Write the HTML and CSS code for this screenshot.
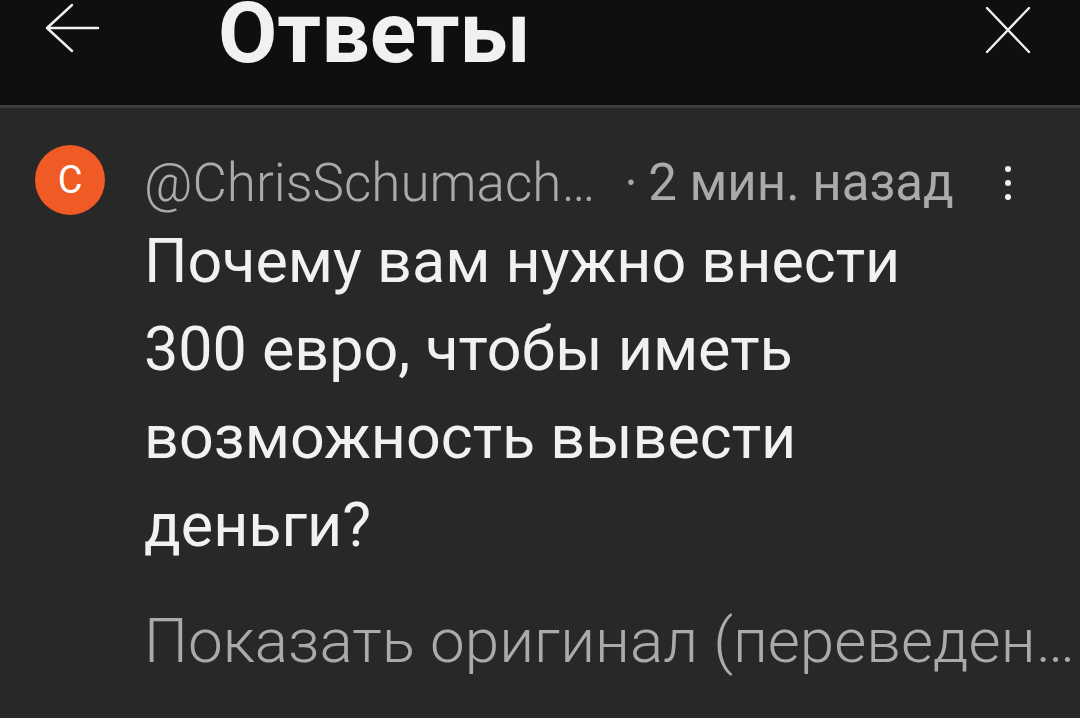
FILE: index.html
```html
<!DOCTYPE html>
<html lang="ru">
<head>
<meta charset="utf-8">
<title>Ответы</title>
<link rel="stylesheet" href="styles.css">
</head>
<body>
<div class="page">
  <header class="topbar">
    <svg class="back" width="56" height="52" viewBox="0 0 56 52" aria-hidden="true">
      <path d="M3 26H54M3 26L28 3M3 26L28 49" fill="none" stroke="#f1f1f1" stroke-width="2.4" stroke-linecap="round"/>
    </svg>
    <h1 class="title">Ответы</h1>
    <svg class="close" width="48" height="50" viewBox="0 0 48 50" aria-hidden="true">
      <path d="M3 3L45 47M45 3L3 47" fill="none" stroke="#f1f1f1" stroke-width="2.4" stroke-linecap="round"/>
    </svg>
  </header>
  <section class="comment">
    <div class="avatar">C</div>
    <div class="content">
      <div class="meta">
        <span class="author">@ChrisSchumach…</span>
        <span class="sep">•</span>
        <span class="time">2 мин. назад</span>
        <svg class="kebab" width="12" height="36" viewBox="0 0 12 36" aria-hidden="true">
          <circle cx="6" cy="4" r="3" fill="#f1f1f1"/>
          <circle cx="6" cy="18" r="3" fill="#f1f1f1"/>
          <circle cx="6" cy="32" r="3" fill="#f1f1f1"/>
        </svg>
      </div>
      <p class="text">Почему вам нужно внести<br>300 евро, чтобы иметь<br>возможность вывести<br>деньги?</p>
      <div class="original">Показать оригинал (переведен…</div>
    </div>
  </section>
</div>
</body>
</html>
```
FILE: styles.css
```css
html, body {
  margin: 0;
  padding: 0;
  background: #282828;
}
body {
  font-family: Roboto, "Noto Sans", "Liberation Sans", sans-serif;
  color: #f1f1f1;
  width: 1080px;
  height: 718px;
  overflow: hidden;
}
.page {
  display: flex;
  flex-direction: column;
}
.topbar {
  height: 105px;
  background: #0f0f0f;
  border-bottom: 3px solid #3d3d3d;
  display: flex;
  align-items: flex-start;
}
.back {
  margin-left: 44px;
  margin-top: 2px;
  flex: none;
}
.title {
  margin: 1px 0 0 118px;
  font-size: 86px;
  line-height: 64px;
  font-weight: 700;
  color: #f1f1f1;
}
.close {
  margin-left: auto;
  margin-right: 48px;
  margin-top: 5px;
  flex: none;
}
.comment {
  display: flex;
  align-items: flex-start;
  padding: 37px 0 0 35px;
}
.avatar {
  flex: none;
  width: 70px;
  height: 70px;
  border-radius: 50%;
  background: #f05a24;
  color: #ffffff;
  font-size: 38px;
  line-height: 70px;
  text-align: center;
}
.content {
  flex: 1;
  margin-left: 39px;
  padding-top: 8px;
  min-width: 0;
}
.meta {
  display: flex;
  align-items: center;
  height: 60px;
  line-height: 60px;
  color: #aaaaaa;
  white-space: nowrap;
}
.author {
  font-size: 53px;
  font-weight: 300;
}
.sep {
  font-size: 26px;
  margin-left: 31px;
  margin-right: 13px;
}
.time {
  font-size: 51px;
}
.kebab {
  margin-left: auto;
  margin-right: 66px;
}
.text {
  margin: 4px 0 0;
  font-size: 61px;
  line-height: 88px;
  color: #f1f1f1;
}
.original {
  margin-top: 28px;
  font-size: 62px;
  line-height: 88px;
  color: #aaaaaa;
  white-space: nowrap;
  font-weight: 300;
}
```
